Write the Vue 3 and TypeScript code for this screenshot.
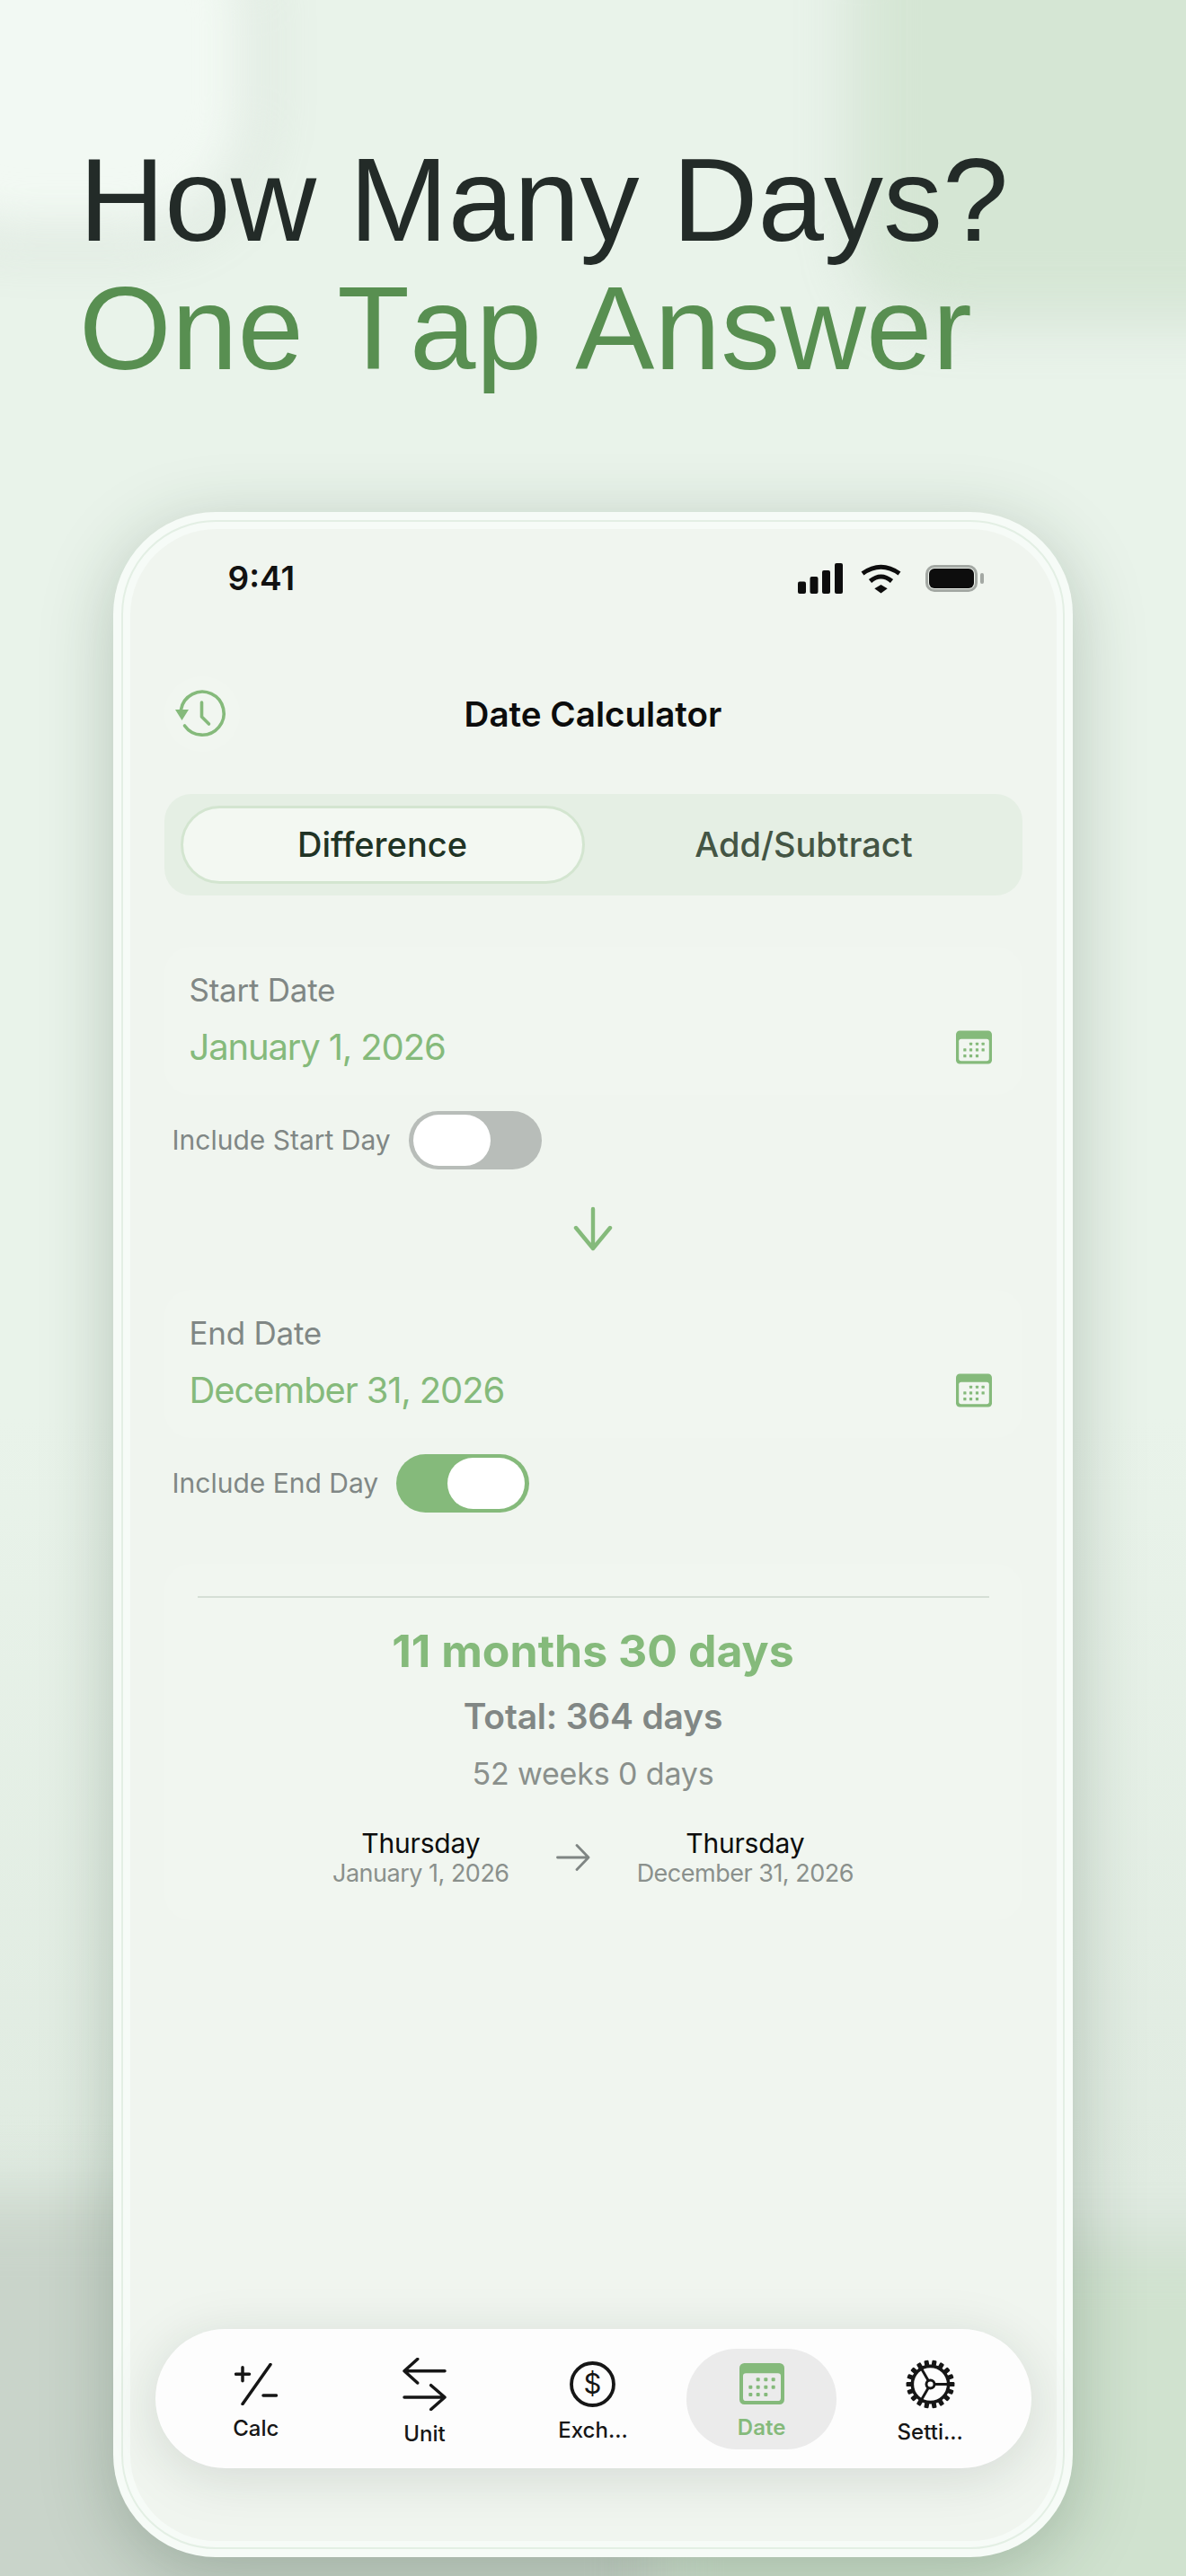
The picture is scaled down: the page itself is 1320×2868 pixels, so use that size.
<script setup lang="ts">
const dots: [number, number][] = [
  [62, 55], [88, 55], [113, 55],
  [37, 80], [62, 80], [88, 80], [113, 80],
  [37, 105], [62, 105], [88, 105]
]
const teeth = Array.from({ length: 18 }, (_, i) => i * 20)
const cards = [
  { label: 'Start Date', value: 'January 1, 2026', toggle: 'Include Start Day', on: false },
  { label: 'End Date', value: 'December 31, 2026', toggle: 'Include End Day', on: true }
]
</script>

<template>
  <div class="page">
    <div class="blob blob-tl"></div>
    <div class="blob blob-tr"></div>
    <div class="blob blob-bl"></div>
    <div class="blob blob-br"></div>

    <h1 class="headline">
      <span class="line-dark">How Many Days?</span>
      <span class="line-green">One Tap Answer</span>
    </h1>

    <div class="phone">
      <div class="phone-rim">
        <div class="screen">
          <div class="status">
            <span class="time">9:41</span>
            <div class="status-icons">
              <svg class="signal" viewBox="0 0 50 34" width="50" height="34">
                <rect x="0" y="20.5" width="9" height="13.5" rx="2" />
                <rect x="13.5" y="15" width="9" height="19" rx="2" />
                <rect x="27" y="8" width="9" height="26" rx="2" />
                <rect x="41" y="0" width="9" height="34" rx="2" />
              </svg>
              <svg class="wifi" viewBox="0 0 45 34" width="45" height="34">
                <path d="M2 11.5Q22.5 -3 43 11.5" fill="none" stroke="#0d0d0d" stroke-width="5" />
                <path d="M10.5 20Q22.5 10 34.5 20" fill="none" stroke="#0d0d0d" stroke-width="5" />
                <path d="M15.3 28.3L22.5 24L29.7 28.3L22.5 33.5Z" fill="#0d0d0d" />
              </svg>
              <div class="battery">
                <div class="battery-body"><div class="battery-fill"></div></div>
                <div class="battery-nub"></div>
              </div>
            </div>
          </div>

          <div class="header">
            <div class="history">
              <svg viewBox="0 0 60 60" width="60" height="60">
                <path d="M6.5 25A24 24 0 1 1 10.5 43" fill="none" stroke="#85ba7b" stroke-width="3.6" stroke-linecap="round" />
                <path d="M0 25H15L7.5 37Z" fill="#85ba7b" />
                <path d="M29.5 17V33L37.5 41" fill="none" stroke="#85ba7b" stroke-width="3.6" stroke-linecap="round" stroke-linejoin="round" />
              </svg>
            </div>
            <div class="title">Date Calculator</div>
            <div class="header-spacer"></div>
          </div>

          <div class="segmented">
            <div class="seg seg-active">Difference</div>
            <div class="seg seg-idle">Add/Subtract</div>
          </div>

          <template v-for="(c, i) in cards" :key="c.label">
            <div class="date-card">
              <div class="date-text">
                <div class="date-label">{{ c.label }}</div>
                <div class="date-value">{{ c.value }}</div>
              </div>
              <svg class="cal-small" viewBox="0 0 150 138" width="40" height="38">
                <rect width="150" height="138" rx="16" fill="#85ba7b" />
                <rect x="12" y="34" width="126" height="92" rx="10" fill="#f1f6f0" />
                <rect v-for="d in dots" :key="d.join()" :x="d[0] - 6" :y="d[1] - 6" width="12" height="12" rx="2" fill="#85ba7b" />
              </svg>
            </div>
            <div class="toggle-row">
              <span class="toggle-label">{{ c.toggle }}</span>
              <div class="toggle" :class="{ 'toggle-on': c.on }"><div class="knob"></div></div>
            </div>
            <div v-if="i === 0" class="down">
              <svg viewBox="0 0 44 50" width="44" height="50">
                <path d="M22 3V47M3 24L22 47L41 24" fill="none" stroke="#85ba7b" stroke-width="4.4" stroke-linecap="round" stroke-linejoin="round" />
              </svg>
            </div>
          </template>

          <div class="result">
            <div class="rule"></div>
            <div class="res-main">11 months 30 days</div>
            <div class="res-total">Total: 364 days</div>
            <div class="res-weeks">52 weeks 0 days</div>
            <div class="res-dates">
              <div class="res-col">
                <div class="res-day">Thursday</div>
                <div class="res-date">January 1, 2026</div>
              </div>
              <svg class="res-arrow" viewBox="0 0 38 30" width="38" height="30">
                <path d="M1.5 15H36M23 1.5L36 15L23 28.5" fill="none" stroke="#7f8583" stroke-width="2.8" stroke-linecap="round" stroke-linejoin="round" />
              </svg>
              <div class="res-col">
                <div class="res-day">Thursday</div>
                <div class="res-date">December 31, 2026</div>
              </div>
            </div>
          </div>

          <div class="tabbar">
            <div class="tab">
              <svg viewBox="0 0 48 47" width="48" height="47">
                <path d="M1.5 12.3H16.5M9 4.8V19.8M40 1.5L9 45.5M32 36H46.5" fill="none" stroke="#161616" stroke-width="3.5" stroke-linecap="round" />
              </svg>
              <span class="tab-label">Calc</span>
            </div>
            <div class="tab">
              <svg viewBox="0 0 49 59" width="49" height="59">
                <path d="M47 14.7H2M16.7 1.5L2 14.7L16.7 28M2 44H47M31.7 30.7L47 44L31.7 57.5" fill="none" stroke="#161616" stroke-width="3.5" stroke-linecap="round" stroke-linejoin="round" />
              </svg>
              <span class="tab-label">Unit</span>
            </div>
            <div class="tab">
              <svg viewBox="0 0 51 51" width="51" height="51">
                <circle cx="25.5" cy="25.5" r="23.5" fill="none" stroke="#161616" stroke-width="3.8" />
                <text x="25.5" y="36" text-anchor="middle" class="dollar">$</text>
              </svg>
              <span class="tab-label">Exch...</span>
            </div>
            <div class="tab tab-active">
              <svg viewBox="0 0 150 138" width="50" height="46">
                <rect width="150" height="138" rx="16" fill="#85ba7b" />
                <rect x="12" y="34" width="126" height="92" rx="10" fill="#ebebeb" />
                <rect v-for="d in dots" :key="d.join()" :x="d[0] - 6" :y="d[1] - 6" width="12" height="12" rx="3" fill="#85ba7b" />
              </svg>
              <span class="tab-label">Date</span>
            </div>
            <div class="tab">
              <svg viewBox="-28 -28 56 56" width="55" height="55">
                <circle r="20.5" fill="none" stroke="#161616" stroke-width="3.6" />
                <rect v-for="t in teeth" :key="t" x="-2.6" y="-27.4" width="5.2" height="7.5" rx="1.2" :transform="`rotate(${t + 10})`" fill="#161616" />
                <circle r="4.6" fill="none" stroke="#161616" stroke-width="3" />
                <path d="M4.6 0H20.5M-2.3 -4L-10.25 -17.75M-2.3 4L-10.25 17.75" fill="none" stroke="#161616" stroke-width="3" />
              </svg>
              <span class="tab-label">Setti...</span>
            </div>
          </div>
        </div>
      </div>
    </div>
  </div>
</template>

<style>
html, body { margin: 0; padding: 0; }
</style>

<style scoped>
.page {
  position: relative;
  width: 1320px;
  height: 2868px;
  overflow: hidden;
  padding-top: 151px;
  box-sizing: border-box;
  background: linear-gradient(180deg, #e9f3ea 0, #e9f3ea 55%, #e0ebe1 85%, #e0ebe1 100%);
  font-family: Inter, "Liberation Sans", sans-serif;
}
.blob { position: absolute; }
.blob-tl {
  left: -120px; top: -120px; width: 395px; height: 375px;
  border-radius: 130px;
  background: #f2f9f3;
  box-shadow: 0 0 30px 12px rgba(40, 65, 50, 0.17);
  filter: blur(28px);
}
.blob-tr {
  left: 960px; top: -120px; width: 520px; height: 465px;
  border-radius: 90px;
  background: #d5e6d4;
  box-shadow: 0 0 30px 12px rgba(40, 65, 50, 0.1);
  filter: blur(30px);
}
.blob-bl {
  left: -120px; top: 2445px; width: 860px; height: 600px;
  background: #c9d4ca;
  filter: blur(38px);
}
.blob-br {
  left: 740px; top: 2505px; width: 700px; height: 600px;
  background: #d0e2cf;
  box-shadow: 0 0 30px 10px rgba(40, 65, 50, 0.1);
  filter: blur(30px);
}
.headline {
  position: relative;
  margin: 0;
  padding-left: 88px;
  font-family: "Liberation Sans", Arial, sans-serif;
  font-weight: 400;
  font-size: 132px;
  line-height: 143px;
  font-kerning: none;
}
.headline span { display: block; white-space: nowrap; }
.line-dark { color: #232b28; }
.line-green { color: #588f51; letter-spacing: 0.25px; }

.phone {
  position: relative;
  width: 1068px;
  height: 2277px;
  margin: 133px 0 0 126px;
  box-sizing: border-box;
  padding: 9px;
  border-radius: 114px;
  background: #f6fbf7;
  box-shadow: 0 18px 80px rgba(30, 60, 40, 0.26);
}
.phone-rim {
  height: 100%;
  box-sizing: border-box;
  padding: 7.5px;
  border: 2px solid #e3efe4;
  border-radius: 105px;
}
.screen {
  height: 100%;
  box-sizing: border-box;
  padding: 38px 38px 80.5px;
  border-radius: 96px;
  background: #f0f5ef;
  display: flex;
  flex-direction: column;
}

.status {
  display: flex;
  justify-content: space-between;
  align-items: center;
  height: 34px;
  padding: 0 43px 0 71px;
}
.time { font-size: 37px; font-weight: 600; color: #111; line-height: 34px; }
.status-icons { display: flex; align-items: center; gap: 20px; }
.signal { fill: #0d0d0d; display: block; }
.wifi { display: block; margin-right: 7px; }
.battery { display: flex; align-items: center; gap: 3px; }
.battery-body {
  width: 58px; height: 30px; box-sizing: border-box;
  border: 3px solid #a3a8a3; border-radius: 10px; padding: 1px;
}
.battery-fill { width: 100%; height: 100%; background: #0d0d0d; border-radius: 6px; }
.battery-nub { width: 4px; height: 12px; border-radius: 2px; background: #a3a8a3; }

.header {
  display: grid;
  grid-template-columns: 84px 1fr 84px;
  align-items: center;
  height: 84px;
  margin-top: 92px;
}
.history {
  width: 84px; height: 84px; border-radius: 50%;
  background: #f1f6f0;
  display: flex; align-items: center; justify-content: center;
}
.history svg { display: block; }
.title { text-align: center; font-size: 38.6px; font-weight: 600; color: #0c0c0c; line-height: 48px; }

.segmented {
  display: flex;
  height: 113px;
  margin-top: 47px;
  box-sizing: border-box;
  padding: 13px 18px;
  border-radius: 30px;
  background: #e5efe4;
}
.seg { display: flex; align-items: center; justify-content: center; font-size: 38px; font-weight: 500; }
.seg-active {
  width: 450px;
  box-sizing: border-box;
  border: 3px solid #d3e5d0;
  border-radius: 44px;
  background: #f3f8f2;
  color: #1f3325;
}
.seg-idle { flex: 1; padding-left: 19px; color: #445544; }

.date-card {
  display: flex;
  align-items: flex-start;
  justify-content: space-between;
  height: 165px;
  margin-top: 57px;
  box-sizing: border-box;
  padding: 27px 34px 0 28px;
  border-radius: 30px;
  background: #f1f6f0;
}
.down + .date-card { margin-top: 43px; }
.date-label { font-size: 35px; line-height: 42px; color: #808785; letter-spacing: -0.25px; }
.date-value { font-size: 40px; line-height: 48px; margin-top: 19px; color: #85ba7b; letter-spacing: -1.15px; }
.cal-small { display: block; margin-top: 66px; }

.toggle-row {
  display: flex;
  align-items: center;
  gap: 20px;
  height: 65px;
  margin-top: 18px;
  padding-left: 9px;
}
.toggle-label { font-size: 30px; color: #808785; }
.toggle {
  width: 148px; height: 65px; box-sizing: border-box;
  padding: 4px 5px;
  border-radius: 33px;
  background: #b8bdb9;
  display: flex;
}
.toggle-on { background: #85ba7b; justify-content: flex-end; }
.knob { width: 86px; height: 57px; border-radius: 29px; background: #fff; }

.down { display: flex; justify-content: center; margin-top: 41px; height: 50px; }
.down svg { display: block; }

.result {
  height: 397px;
  margin-top: 57px;
  box-sizing: border-box;
  padding: 36px 37px 0;
  border-radius: 30px;
  background: #f1f6f0;
  text-align: center;
}
.rule { height: 2px; background: #d5dfd5; }
.res-main { font-size: 50px; line-height: 60px; margin-top: 29px; font-weight: 700; color: #85ba7b; }
.res-total { font-size: 39px; line-height: 48px; margin-top: 19px; font-weight: 600; color: #818785; letter-spacing: -0.2px; }
.res-weeks { font-size: 34px; line-height: 40px; margin-top: 20px; color: #8a908c; letter-spacing: -0.15px; }
.res-dates { display: flex; justify-content: center; align-items: center; gap: 52px; margin-top: 39px; }
.res-day { font-size: 30px; line-height: 36px; color: #0c0c0c; letter-spacing: -0.2px; }
.res-date { font-size: 27px; line-height: 32px; color: #8a908c; white-space: nowrap; letter-spacing: -0.5px; }
.res-arrow { display: block; }

.tabbar {
  display: grid;
  grid-template-columns: repeat(5, 1fr);
  margin: auto -10px 0;
  height: 155px;
  box-sizing: border-box;
  padding: 22px 18.5px 21px;
  border-radius: 78px;
  background: #fdfdfd;
  box-shadow: 0 10px 60px rgba(20, 40, 30, 0.13);
}
.tab {
  display: flex;
  flex-direction: column;
  align-items: center;
  justify-content: center;
  gap: 11px;
  padding-top: 6px;
  box-sizing: border-box;
  border-radius: 56px;
}
.tab svg { display: block; }
.tab-label { font-size: 24px; line-height: 29px; font-weight: 500; color: #161616; }
.tab-active { background: #ebebeb; width: 167px; justify-self: center; }
.tab-active .tab-label { color: #85ba7b; font-weight: 600; }
.dollar { font-family: Inter, sans-serif; font-size: 31px; fill: #161616; }
</style>
